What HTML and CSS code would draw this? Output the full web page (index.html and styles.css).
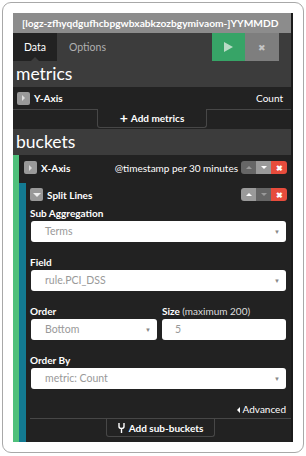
FILE: index.html
```html
<!DOCTYPE html>
<html lang="en">
<head>
    <meta charset="UTF-8">
    <meta name="viewport" content="width=device-width, initial-scale=1.0">
    <title>Visualize - Data</title>
    <link rel="stylesheet" href="styles.css">
</head>
<body>
    <div class="frame">
        <div class="panel">
            <div class="index-title">[logz-zfhyqdgufhcbpgwbxabkzozbgymivaom-]YYMMDD</div>

            <div class="tabs">
                <div class="tab active">Data</div>
                <div class="tab">Options</div>
                <div class="tab-spacer"></div>
                <div class="btn-apply">
                    <svg width="9" height="10" viewBox="0 0 9 10"><path d="M0 0 L9 5 L0 10 Z" fill="#b9dcc6"/></svg>
                </div>
                <div class="btn-discard">&#x2716;</div>
            </div>

            <div class="section-title">metrics</div>
            <div class="agg-row metric-row">
                <span class="toggle"><span class="tri-right"></span></span>
                <span class="agg-name">Y-Axis</span>
                <span class="agg-desc">Count</span>
            </div>
            <div class="add-wrap">
                <div class="add-btn"><span class="plus">+</span> Add metrics</div>
            </div>

            <div class="section-title">buckets</div>
            <div class="bucket">
                <div class="bar green"></div>
                <div class="bucket-body">
                    <div class="agg-row">
                        <span class="toggle"><span class="tri-right"></span></span>
                        <span class="agg-name">X-Axis</span>
                        <span class="agg-desc">@timestamp per 30 minutes</span>
                        <span class="btn-group">
                            <span class="seg off"><span class="tri-up"></span></span>
                            <span class="seg on"><span class="tri-down"></span></span>
                            <span class="seg remove">&#x2716;</span>
                        </span>
                    </div>

                    <div class="sub">
                        <div class="bar teal"></div>
                        <div class="sub-body">
                            <div class="agg-row sub-row">
                                <span class="toggle"><span class="tri-down white"></span></span>
                                <span class="agg-name">Split Lines</span>
                                <span class="agg-desc"></span>
                                <span class="btn-group">
                                    <span class="seg on"><span class="tri-up"></span></span>
                                    <span class="seg off"><span class="tri-down"></span></span>
                                    <span class="seg remove">&#x2716;</span>
                                </span>
                            </div>

                            <div class="form-group">
                                <label>Sub Aggregation</label>
                                <div class="select">Terms<span class="caret">&#9660;</span></div>
                            </div>

                            <div class="form-group">
                                <label>Field</label>
                                <div class="select">rule.PCI_DSS<span class="caret">&#9660;</span></div>
                            </div>

                            <div class="form-row">
                                <div class="form-group half">
                                    <label>Order</label>
                                    <div class="select">Bottom<span class="caret">&#9660;</span></div>
                                </div>
                                <div class="form-group half">
                                    <label>Size <span class="hint">(maximum 200)</span></label>
                                    <div class="select input">5</div>
                                </div>
                            </div>

                            <div class="form-group">
                                <label>Order By</label>
                                <div class="select">metric: Count<span class="caret">&#9660;</span></div>
                            </div>

                            <div class="advanced"><span class="tri-left"></span> Advanced</div>

                            <div class="add-wrap sub-add">
                                <div class="add-btn">
                                    <svg width="7" height="10" viewBox="0 0 7 10"><path d="M1 0 V3.5 Q1 5.5 3.5 5.5 Q6 5.5 6 3.5 V0 M3.5 5.5 V10" stroke="#fff" stroke-width="1.4" fill="none"/></svg>
                                    Add sub-buckets
                                </div>
                            </div>
                        </div>
                    </div>
                </div>
            </div>
        </div>
    </div>
</body>
</html>
```

FILE: styles.css
```css
* {
    box-sizing: border-box;
}

body {
    margin: 0;
    background-color: #fff;
    font-family: 'Lato', 'Open Sans', sans-serif;
    color: #fff;
}

.frame {
    margin: 2px;
    width: 302px;
    height: 451px;
    padding: 10px;
    border: 1.5px solid #a8a8a8;
    border-radius: 9px;
    overflow: hidden;
}

.panel {
    display: flex;
    flex-direction: column;
    width: 280px;
    height: 429px;
    background-color: #222;
    border-right: 2px solid #1a1a1a;
    overflow: hidden;
}

.index-title {
    height: 20px;
    line-height: 20px;
    padding-left: 9px;
    background-color: #8c8c8c;
    font-size: 10.2px;
    font-weight: bold;
    white-space: nowrap;
}

/* tabs */
.tabs {
    display: flex;
    height: 28px;
    background-color: #3c3c3c;
    font-size: 10.5px;
}

.tab {
    line-height: 28px;
    padding: 0 12px;
    color: #b0b0b0;
}

.tab.active {
    position: relative;
    width: 44px;
    padding: 0;
    text-align: center;
    color: #fff;
    background-color: #222;
}

.tab.active::after {
    content: "";
    position: absolute;
    left: 18px;
    bottom: 0;
    border-left: 4px solid transparent;
    border-right: 4px solid transparent;
    border-bottom: 4px solid #3c3c3c;
}

.tab-spacer {
    flex: 1;
}

.btn-apply,
.btn-discard {
    display: flex;
    align-items: center;
    justify-content: center;
    width: 33px;
}

.btn-apply {
    background-color: #37a467;
}

.btn-discard {
    width: 34px;
    margin-right: 12px;
    background-color: #7e7e7e;
    color: #c4c4c4;
    font-size: 9px;
}

.section-title {
    height: 26px;
    line-height: 26px;
    padding-left: 3px;
    background-color: #3c3c3c;
    font-size: 17.5px;
}

/* agg rows */
.agg-row {
    display: flex;
    align-items: center;
    height: 24px;
    padding: 0 4px 0 5px;
    font-size: 10px;
}

.metric-row {
    height: 23px;
    padding-left: 4px;
    padding-right: 8px;
    border-bottom: 1px solid #474747;
}

.toggle {
    display: flex;
    align-items: center;
    justify-content: center;
    width: 13px;
    height: 13px;
    margin-right: 4px;
    background-color: #999;
    border-radius: 2px;
}

.tri-right {
    border-top: 3px solid transparent;
    border-bottom: 3px solid transparent;
    border-left: 3px solid #ddd;
}

.tri-left {
    display: inline-block;
    border-top: 3px solid transparent;
    border-bottom: 3px solid transparent;
    border-right: 3px solid #fff;
}

.tri-up {
    border-left: 3px solid transparent;
    border-right: 3px solid transparent;
    border-bottom: 3px solid currentColor;
}

.tri-down {
    border-left: 3px solid transparent;
    border-right: 3px solid transparent;
    border-top: 3px solid currentColor;
}

.tri-down.white {
    border-left-width: 4px;
    border-right-width: 4px;
    border-top: 4px solid #eee;
}

.agg-name {
    font-weight: bold;
}

.agg-desc {
    flex: 1;
    text-align: right;
}

.btn-group {
    display: flex;
    height: 13px;
    margin-left: 3px;
    border-radius: 3px;
    overflow: hidden;
}

.seg {
    display: flex;
    align-items: center;
    justify-content: center;
    width: 15px;
}

.seg.off {
    background-color: #666;
    color: #999;
}

.seg.on {
    background-color: #9a9a9a;
    color: #fff;
}

.seg.remove {
    width: 16px;
    background-color: #e74c3c;
    font-size: 8px;
    font-weight: bold;
}

/* add buttons */
.add-wrap {
    display: flex;
    justify-content: center;
    height: 19px;
}

.add-btn {
    display: flex;
    align-items: center;
    justify-content: center;
    gap: 3px;
    width: 110px;
    height: 19px;
    margin-top: -1px;
    background-color: #222;
    border: 1px solid #474747;
    border-top: none;
    border-radius: 0 0 3px 3px;
    font-size: 10px;
    font-weight: bold;
}

.plus {
    font-size: 14px;
    line-height: 1;
}

/* buckets */
.bucket {
    flex: 1;
    display: flex;
}

.bar {
    width: 6px;
}

.bar.green {
    background-color: #4fc07b;
}

.bar.teal {
    width: 7px;
    background-color: #137a92;
}

.bucket-body {
    flex: 1;
    display: flex;
    flex-direction: column;
}

.bucket-body > .agg-row {
    height: 25px;
}

.sub {
    flex: 1;
    display: flex;
    margin-top: 3px;
}

.sub-body {
    flex: 1;
    display: flex;
    flex-direction: column;
    padding-left: 4px;
}

.sub-row {
    height: 23px;
    padding-left: 0;
}

.form-group {
    margin: 0 5px 13px 0;
}

.form-group label {
    display: block;
    height: 14px;
    line-height: 14px;
    margin-bottom: 1px;
    font-size: 10px;
    font-weight: bold;
}

.hint {
    font-weight: normal;
    color: #ddd;
}

.select {
    position: relative;
    height: 21px;
    line-height: 21px;
    margin-left: 1px;
    padding-left: 14px;
    background-color: #fff;
    border-radius: 3px;
    color: #999;
    font-size: 10.5px;
}

.select.input {
    padding-left: 13px;
    margin-left: 0;
}

.caret {
    position: absolute;
    right: 6px;
    top: 0;
    font-size: 6px;
    color: #888;
}

.form-row {
    display: flex;
    gap: 5px;
    margin-right: 5px;
}

.form-group.half {
    margin-right: 0;
}

.form-group.half:first-child {
    width: 127px;
}

.form-group.half:last-child {
    flex: 1;
}

.advanced {
    height: 14px;
    line-height: 14px;
    padding-right: 5px;
    text-align: right;
    font-size: 10px;
}

.sub-add {
    margin-top: 2px;
    border-top: 1px solid #474747;
}

.sub-add .add-btn {
    width: 109px;
    height: 18px;
    margin-top: 0;
    gap: 4px;
}
```
